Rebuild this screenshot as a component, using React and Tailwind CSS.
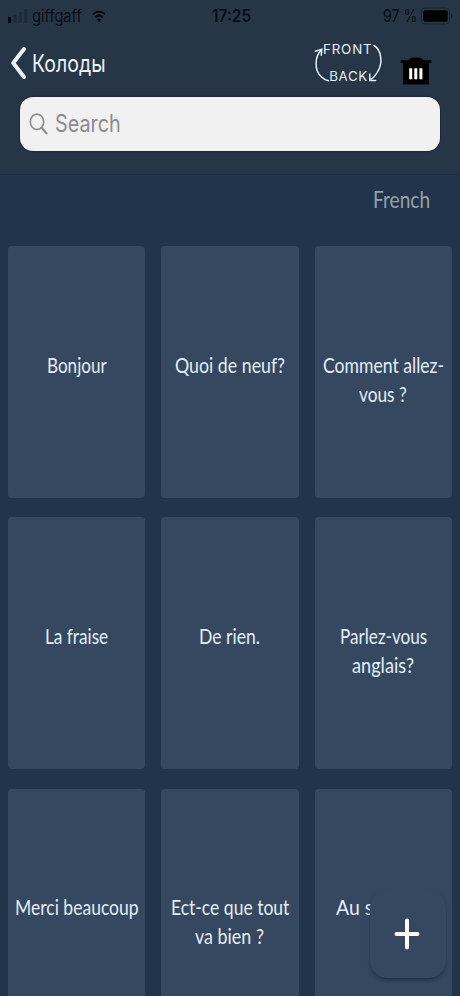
import React, { useLayoutEffect, useRef, useState } from 'react';

const ROWS = [
    [
        [['Bonjour', 60]],
        [['Quoi de neuf?', 110]],
        [['Comment allez-', 121], ['vous ?', 48]]
    ],
    [
        [['La fraise', 63]],
        [['De rien.', 61]],
        [['Parlez-vous', 87], ['anglais?', 62]]
    ],
    [
        [['Merci beaucoup', 124]],
        [['Ect-ce que tout', 118], ['va bien ?', 69]],
        [['Au secours', 94]]
    ]
];

// Condenses a label horizontally so that it takes up exactly `width` pixels
const Fit = ({ width, className = '', children }) => {
    const ref = useRef(null);
    const [scale, setScale] = useState(1);

    useLayoutEffect(() => {
        setScale(width / ref.current.offsetWidth);
    }, [width, children]);

    return (
        <span className={`flex shrink-0 whitespace-nowrap ${className}`} style={{ width }}>
            <span ref={ref} className="shrink-0 origin-left" style={{ transform: `scaleX(${scale})` }}>
                {children}
            </span>
        </span>
    );
};

const StatusBar = () => (
    <div className="grid h-8 grid-cols-[1fr_39px_1fr] items-center pl-2 pr-[7px] text-[#080d14]">
        <div className="flex items-center">
            <svg width="20" height="16" viewBox="0 0 20 16">
                <rect x="0" y="9" width="3.2" height="6" rx="0.8" fill="#05080c" />
                <rect x="5.5" y="7" width="3.2" height="8" rx="0.8" fill="#1d2b3c" />
                <rect x="10.8" y="4" width="3.2" height="11" rx="0.8" fill="#1d2b3c" />
                <rect x="16.2" y="1" width="3.2" height="14" rx="0.8" fill="#1d2b3c" />
            </svg>
            <Fit width={50} className="ml-1 font-[Inter,sans-serif] text-[17px] leading-8">giffgaff</Fit>
            <svg className="ml-[10px]" width="14" height="13" viewBox="0 0 14 13" fill="none" stroke="#05080c">
                <path d="M1 4.3C4.5 .8 9.5 .8 13 4.3" strokeWidth="2" />
                <path d="M3.2 7.4c2.3-2.3 5.3-2.3 7.6 0" strokeWidth="2" />
                <path d="M7 12 4.7 9.4c1.4-1.3 3.2-1.3 4.6 0z" fill="#05080c" stroke="none" />
            </svg>
        </div>
        <Fit width={39} className="ml-px font-[Inter,sans-serif] text-[17px] font-semibold leading-8">17:25</Fit>
        <div className="flex items-center justify-end">
            <Fit width={34} className="font-[Inter,sans-serif] text-[17px] leading-8">97 %</Fit>
            <svg className="ml-1" width="32" height="18" viewBox="0 0 32 18">
                <rect x="0.5" y="1" width="28" height="16" rx="3.5" fill="none" stroke="#1a2633" />
                <rect x="2.3" y="3.2" width="24.4" height="11.6" rx="2" fill="#000" />
                <path d="M30 6.5c2 1 2 4 0 5z" fill="#16202c" />
            </svg>
        </div>
    </div>
);

const FlipIcon = () => (
    <svg width="74" height="46" viewBox="312 40 74 46" fill="none" stroke="#e6f0fa" strokeWidth="1.5" strokeLinecap="round">
        <path d="M321.3 49.8C314.5 57 314.3 70 321 76.5c2.2 2.3 4.6 3.6 7.5 4.2" />
        <path d="M315.3 51.3 321.8 49.4 321.2 55.2" />
        <path d="M374 45.5c7.5 4.5 8.9 17.500 4 25.500-1.800 3.500-4.500 7-8.200 9" />
        <path d="M369.800 74 369.800 80.500 375.600 80.500" />
        <g fill="#e6f0fa" stroke="none" fontFamily="Inter, sans-serif" fontSize="13.2">
            <text x="323" y="54" textLength="49.500" lengthAdjust="spacingAndGlyphs" letterSpacing="0.8">FRONT</text>
            <text x="329.300" y="80.800" textLength="38.500" lengthAdjust="spacingAndGlyphs" letterSpacing="0.6">BACK</text>
        </g>
    </svg>
);

const TrashIcon = () => (
    <svg width="32" height="30" viewBox="0 0 32 30">
        <path d="M8 4.200 11 2q.8-.6 2-.6h6q1.200 0 2 .6l3 2.200h6.500q1 0 1 1V7H.5V5.200q0-1 1-1z" fill="#000" />
        <path d="M3 6h26v22.500H3z" fill="#000" />
        <path d="M9.200 12.200h3v11h-3zM14.300 12.200h3v11h-3zM19.400 12.200h3v11h-3z" fill="#fff" />
    </svg>
);

const Header = () => (
    <header className="h-[175px] border-b border-[#1f2e3e] bg-[#263647]">
        <StatusBar />
        <div className="flex h-[65px] items-start text-[#eaf2fa]">
            <svg className="ml-[10px] mt-[14px]" width="18" height="34" viewBox="0 0 18 34" fill="none" stroke="currentColor" strokeWidth="4" strokeLinecap="round" strokeLinejoin="round">
                <path d="M14 3 3.2 17 14 31" />
            </svg>
            <Fit width={74} className="ml-[4px] mt-[16px] font-[Inter,sans-serif] text-[24px] leading-[32px]">Колоды</Fit>
            <div className="ml-auto mr-[14px] mt-2">
                <FlipIcon />
            </div>
            <div className="mr-[28px] mt-6">
                <TrashIcon />
            </div>
        </div>
        <div className="mx-5 flex h-[54px] items-center rounded-[13px] bg-[#f1f1f1] pl-[9px] text-[#8b8b8e] shadow-[0_0_1px_1px_#1f2a38]">
            <svg width="20" height="24" viewBox="0 0 20 24" fill="none" stroke="currentColor" strokeWidth="1.6">
                <ellipse cx="8" cy="9.8" rx="6.7" ry="7.7" />
                <path d="M12.5 15.5 18 22" strokeWidth="2" />
            </svg>
            <Fit width={66} className="ml-[6px] font-[Inter,sans-serif] text-[24px] leading-[54px]">Search</Fit>
        </div>
    </header>
);

const Card = ({ lines }) => (
    <div className="flex h-[252px] flex-col items-center rounded-[4px] bg-[#36485f] pt-[104.7px]">
        {lines.map(([text, width]) => (
            <Fit key={text} width={width} className="text-[20.5px] leading-[29px] text-[#e2eefa]">{text}</Fit>
        ))}
    </div>
);

const App = () => {
    return (
        <div className="relative h-[996px] w-[460px] overflow-hidden bg-[#22344c] font-[Lato,sans-serif]">
            <Header />

            {/* Deck language */}
            <div className="flex h-[71px] justify-end pr-[30px] pt-[9px]">
                <Fit width={57} className="text-[22.5px] leading-[32px] text-[#98a1a8]">French</Fit>
            </div>

            {/* Cards */}
            <div className="grid grid-cols-3 gap-x-4 gap-y-[19.4px] px-[8.3px]">
                {ROWS.flat().map((lines) => (
                    <Card key={lines[0][0]} lines={lines} />
                ))}
            </div>

            {/* Add card */}
            <button className="absolute bottom-[18px] right-[14px] flex h-[88px] w-[76px] items-center justify-center rounded-[18px] bg-[#36485f] shadow-[0_3px_4px_-1px_#1f2f42]">
                <svg className="mr-0.5" width="28" height="34" viewBox="0 0 28 34" stroke="#fff" strokeWidth="4" strokeLinecap="round">
                    <path d="M14 3.5v27M3.5 17h21" />
                </svg>
            </button>
        </div>
    );
};

export default App;
